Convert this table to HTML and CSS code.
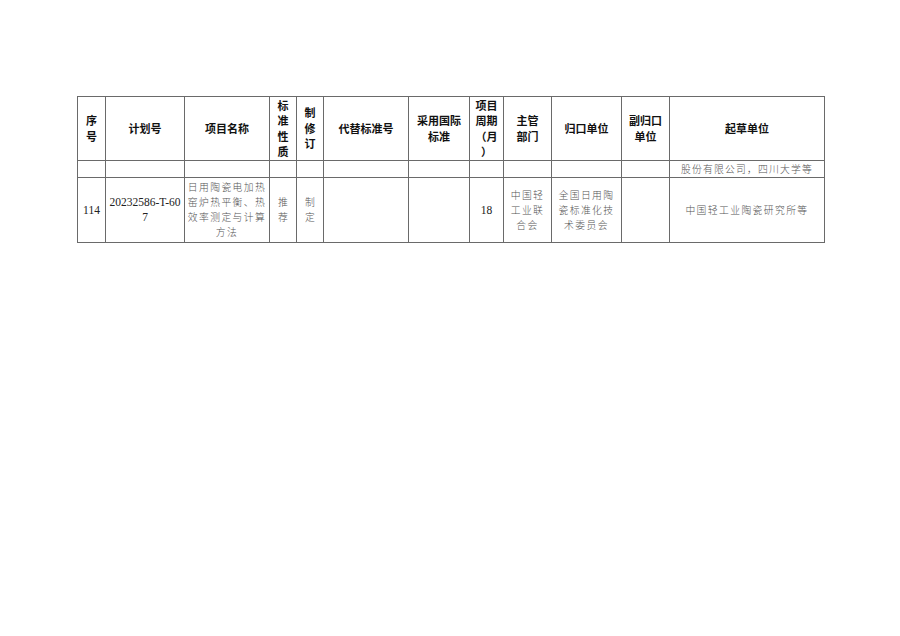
FILE: index.html
```html
<!DOCTYPE html>
<html lang="zh">
<head>
<meta charset="utf-8">
<link rel="stylesheet" href="styles.css">
</head>
<body>
<div class="page">
<table class="plan">
<colgroup>
<col class="c1"><col class="c2"><col class="c3"><col class="c4"><col class="c5"><col class="c6"><col class="c7"><col class="c8"><col class="c9"><col class="c10"><col class="c11"><col class="c12">
</colgroup>
<thead>
<tr class="head">
<th>序<br>号</th>
<th>计划号</th>
<th>项目名称</th>
<th>标<br>准<br>性<br>质</th>
<th>制<br>修<br>订</th>
<th>代替标准号</th>
<th>采用国际<br>标准</th>
<th>项目<br>周期<br>（月<br>）</th>
<th>主管<br>部门</th>
<th>归口单位</th>
<th>副归口<br>单位</th>
<th>起草单位</th>
</tr>
</thead>
<tbody>
<tr class="cont">
<td></td><td></td><td></td><td></td><td></td><td></td><td></td><td></td><td></td><td></td><td></td>
<td class="cjk">股份有限公司，四川大学等</td>
</tr>
<tr class="item">
<td class="num">114</td>
<td class="num">20232586-T-60<br>7</td>
<td class="cjk">日用陶瓷电加热<br>窑炉热平衡、热<br>效率测定与计算<br>方法</td>
<td class="cjk narrow">推<br>荐</td>
<td class="cjk narrow">制<br>定</td>
<td></td>
<td></td>
<td class="num">18</td>
<td class="cjk">中国轻<br>工业联<br>合会</td>
<td class="cjk">全国日用陶<br>瓷标准化技<br>术委员会</td>
<td></td>
<td class="cjk">中国轻工业陶瓷研究所等</td>
</tr>
</tbody>
</table>
</div>
</body>
</html>
```
FILE: styles.css
```css
html, body {
  margin: 0;
  padding: 0;
  background: #fff;
}
.page {
  padding: 96px 0 0 77px;
}
.plan {
  border-collapse: collapse;
  table-layout: fixed;
  width: 747px;
}
.c1 { width: 28px; }
.c2 { width: 79px; }
.c3 { width: 85px; }
.c4 { width: 27px; }
.c5 { width: 27px; }
.c6 { width: 85px; }
.c7 { width: 61px; }
.c8 { width: 34px; }
.c9 { width: 48px; }
.c10 { width: 70px; }
.c11 { width: 48px; }
.c12 { width: 155px; }
.plan th, .plan td {
  border: 1px solid #6a6a6a;
  padding: 0;
  text-align: center;
  vertical-align: middle;
}
.head th {
  height: 63px;
  font-family: "Noto Sans CJK SC", "Liberation Sans", sans-serif;
  font-weight: 700;
  font-size: 11px;
  line-height: 15.5px;
  color: #111;
}
.cont td {
  height: 16px;
}
.item td {
  height: 64px;
}
.cjk {
  font-family: "Noto Sans CJK SC", sans-serif;
  font-weight: 300;
  font-size: 9.8px;
  letter-spacing: 1.4px;
  line-height: 15px;
  color: #555;
}
.cont .cjk {
  line-height: 14px;
  letter-spacing: 1.2px;
}
.num {
  font-family: "Liberation Serif", serif;
  font-size: 11.5px;
  line-height: 15px;
  color: #222;
}
.narrow {
  letter-spacing: 0;
}
```
